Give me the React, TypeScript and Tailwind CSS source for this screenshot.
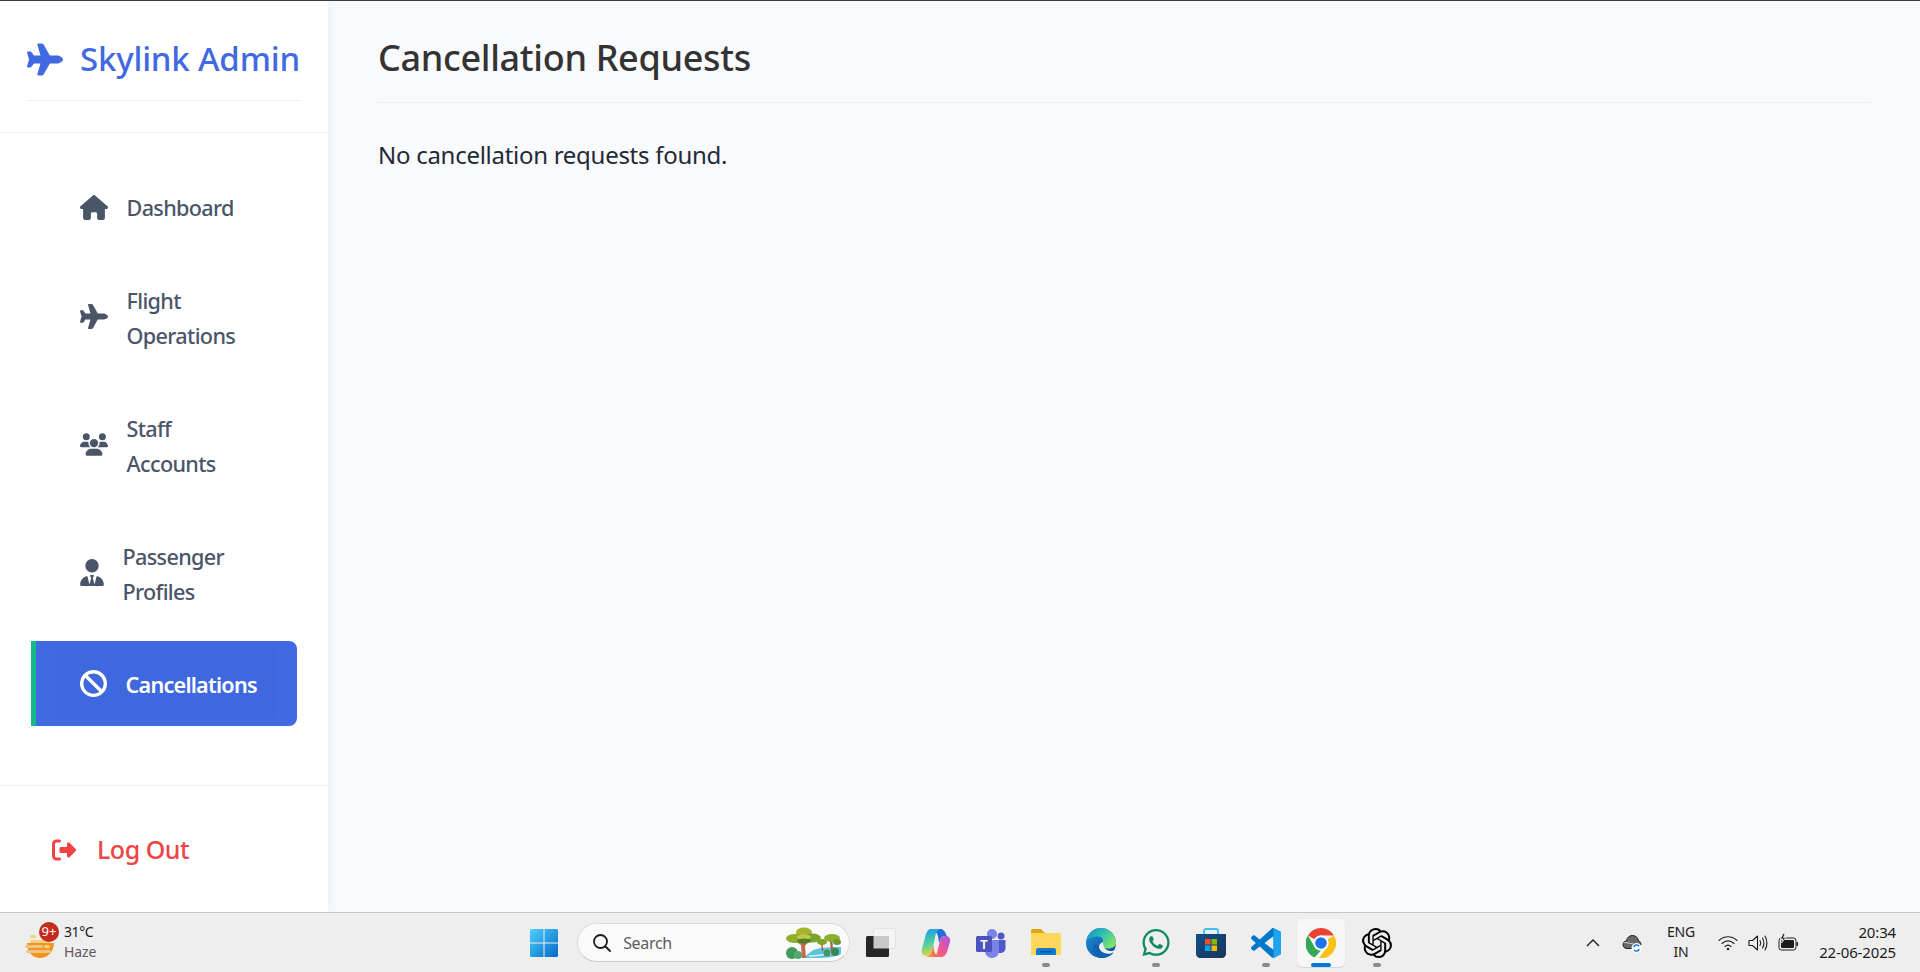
import type { ReactNode } from "react"
import { FaBan, FaHouse, FaPlane, FaRightFromBracket, FaUsers, FaUserTie, FaWhatsapp } from "react-icons/fa6"
import { SiOpenai } from "react-icons/si"

const font = "font-['Noto_Sans',sans-serif]"

const WindowsIcon = () => (
  <svg viewBox="0 0 30 30" className="h-[30px] w-[30px]">
    <defs>
      <linearGradient id="win" x1="0" y1="0" x2="1" y2="1">
        <stop offset="0" stopColor="#4fd0fb" />
        <stop offset="1" stopColor="#0269c8" />
      </linearGradient>
    </defs>
    <path d="M1 2.500A1.500 1.500 0 0 1 2.500 1H14.500V14.500H1ZM15.500 1H27.500A1.500 1.500 0 0 1 29 2.500V14.500H15.500ZM1 15.500H14.500V29H2.500A1.500 1.500 0 0 1 1 27.500ZM15.500 15.500H29V27.500A1.500 1.500 0 0 1 27.500 29H15.500Z" fill="url(#win)" />
  </svg>
)

const TreesIcon = () => (
  <svg viewBox="0 0 56 32" className="h-[32px] w-[56px]">
    <path d="M18 31C30 31 46 32 56 27V20C46 20 38 20 28 23Z" fill="#5cc4dc" />
    <path d="M24 29C34 29 44 27 54 25" stroke="#d6f3f6" strokeWidth="1.500" fill="none" />
    <circle cx="7" cy="26" r="6" fill="#3f9a5c" />
    <circle cx="13" cy="28" r="4" fill="#57a868" />
    <circle cx="42" cy="26" r="3.500" fill="#3f9a5c" />
    <circle cx="50" cy="25" r="4" fill="#2f8a58" />
    <path d="M17 31L16 18L10 14H13L18 16L23 13H25L20 19L21 31Z" fill="#c46a4a" />
    <path d="M46 25L45 14H47.500L48 25Z" fill="#a85f42" />
    <path d="M37 24L36 17H37.500L38.500 24Z" fill="#a85f42" />
    <ellipse cx="19" cy="5.500" rx="8" ry="5" fill="#a3b52c" />
    <ellipse cx="10" cy="11.500" rx="9" ry="4.500" fill="#8fae2e" />
    <ellipse cx="27" cy="11" rx="9" ry="4.500" fill="#7ca32a" />
    <ellipse cx="19" cy="10" rx="7" ry="2.500" fill="#c3c74a" />
    <ellipse cx="19" cy="14" rx="7" ry="2.500" fill="#4f7f26" />
    <ellipse cx="47" cy="11" rx="8" ry="4" fill="#8cb02c" />
    <ellipse cx="37" cy="15" rx="5" ry="3" fill="#7ca32a" />
    <ellipse cx="52" cy="15" rx="4" ry="3" fill="#6c9a2a" />
  </svg>
)

const TaskViewIcon = () => (
  <svg viewBox="0 0 30 30" className="h-[30px] w-[30px]">
    <rect x="7.500" y="0.500" width="22" height="20" rx="1.500" fill="#f4f4f4" stroke="#e2e2e2" />
    <rect x="0" y="8" width="23" height="21" rx="1.500" fill="#262626" />
    <rect x="7.500" y="8" width="15.500" height="12.500" fill="#c9c9c9" />
  </svg>
)

const CopilotIcon = () => (
  <svg viewBox="0 0 30 30" className="h-[30px] w-[30px]">
    <defs>
      <linearGradient id="copa" x1="0.3" y1="0" x2="0.5" y2="1">
        <stop offset="0" stopColor="#1f9be8" />
        <stop offset="0.55" stopColor="#4fd49a" />
        <stop offset="1" stopColor="#f9d33c" />
      </linearGradient>
      <linearGradient id="copb" x1="1" y1="0" x2="0" y2="1">
        <stop offset="0" stopColor="#a855e8" />
        <stop offset="0.6" stopColor="#f0568f" />
        <stop offset="1" stopColor="#f97e3c" />
      </linearGradient>
      <linearGradient id="copc" x1="0" y1="0" x2="1" y2="0">
        <stop offset="0" stopColor="#f9a93c" />
        <stop offset="1" stopColor="#ef4a5f" />
      </linearGradient>
    </defs>
    <path d="M10 1H19C22 1 24 3 25 6L26 9C24 7.500 21 8 20 10L18 15C17.500 6 15 2.500 10 1Z" fill="#1f6fe0" />
    <path d="M10 1H20C17 1 15.500 3 14.800 6L11.500 21C10.500 25 8.500 28 5 28C1.500 28 0 25 1 21L5 6C6 3 7.500 1 10 1Z" fill="url(#copa)" />
    <path d="M25 8C28 8 30 11 29 14L26 24C25 27 22.500 29 20 29H11C14 29 15.500 27 16.200 24L19.500 11C20 9 22 8 25 8Z" fill="url(#copb)" />
    <path d="M5 28C8.500 28 10.500 25 11.500 21L12.500 17C12.500 24 15 29 20 29H9C7.500 29 6 28.500 5 28Z" fill="url(#copc)" />
  </svg>
)

const TeamsIcon = () => (
  <svg viewBox="0 0 30 30" className="h-[30px] w-[30px]">
    <circle cx="16" cy="6" r="5" fill="#7b83eb" />
    <circle cx="25" cy="8" r="3.500" fill="#5059c9" />
    <path d="M21 12H29.500V20C29.500 23 27 25 24 25H21Z" fill="#5059c9" />
    <path d="M9 12H23V23C23 27 20 30 16 30C12 30 9 27 9 23Z" fill="#7b83eb" />
    <rect x="0" y="8" width="16" height="16" rx="1.500" fill="#4b53bc" />
    <text x="8" y="21" textAnchor="middle" fontSize="12" fontWeight="700" fill="#fff" fontFamily="Liberation Sans, sans-serif">T</text>
  </svg>
)

const FolderIcon = () => (
  <svg viewBox="0 0 30 27" className="h-[27px] w-[30px]">
    <path d="M0 2C0 1 1 0 2 0H10L14 4H0Z" fill="#dfa40e" />
    <path d="M0 4H29C29.500 4 30 4.500 30 5V26H0Z" fill="#fdd75c" />
    <path d="M5 26V21C5 20 6 19 7 19H23C24 19 25 20 25 21V26Z" fill="#0c7bd0" />
    <rect x="9" y="22" width="12" height="1.500" fill="#07569a" />
  </svg>
)

const EdgeIcon = () => (
  <svg viewBox="0 0 30 30" className="h-[30px] w-[30px]">
    <defs>
      <linearGradient id="edgea" x1="0" y1="0" x2="1" y2="0.6">
        <stop offset="0" stopColor="#0c8cc9" />
        <stop offset="0.55" stopColor="#34c1b0" />
        <stop offset="1" stopColor="#7fe36a" />
      </linearGradient>
      <linearGradient id="edgeb" x1="0" y1="0" x2="1" y2="1">
        <stop offset="0" stopColor="#1b8fd8" />
        <stop offset="1" stopColor="#0d4d9a" />
      </linearGradient>
    </defs>
    <circle cx="15" cy="15" r="15" fill="url(#edgeb)" />
    <path d="M0.500 12C3 4 9 0 15 0C24 0 30 7 30 15C30 19 26 20.500 21 20.500C17 20.500 15 19 15 17C15 15.500 17 14.500 17 12.500C17 10 14 8 10.500 8.500C6 9 2 11 0.500 12Z" fill="url(#edgea)" />
    <path d="M17 14C15 15 13 16 13 19C13 24 18 27 23 26C20 29 17 30 15 30C22 30 27 27 29 22C26 24 17 24 17 14Z" fill="#eeeeee" />
    <path d="M15 30C21 30 25 28 28 24C24 27 17 26 14 22C12 18 12 16 10 16C7 16 6 20 8 24C10 28 12 30 15 30Z" fill="#0f62ad" />
  </svg>
)

const StoreIcon = () => (
  <svg viewBox="0 0 30 30" className="h-[30px] w-[30px]">
    <defs>
      <linearGradient id="store" x1="0" y1="0" x2="1" y2="1">
        <stop offset="0" stopColor="#0e4f8c" />
        <stop offset="1" stopColor="#1b3457" />
      </linearGradient>
    </defs>
    <path d="M8 6V3C8 2 9 1 10 1H20C21 1 22 2 22 3V6" fill="none" stroke="#3cc2ee" strokeWidth="1.800" />
    <path d="M0 6H30V26C30 28 28 30 26 30H4C2 30 0 28 0 26Z" fill="url(#store)" />
    <rect x="9" y="11" width="5.500" height="5.500" fill="#f25022" />
    <rect x="15.500" y="11" width="5.500" height="5.500" fill="#7fba00" />
    <rect x="9" y="17.500" width="5.500" height="5.500" fill="#00a4ef" />
    <rect x="15.500" y="17.500" width="5.500" height="5.500" fill="#ffb900" />
  </svg>
)

const VsCodeIcon = () => (
  <svg viewBox="0 0 100 100" className="h-[30px] w-[30px]">
    <path d="M71 99.300C72.600 99.900 74.400 99.900 76 99.100L96.500 89.200C98.700 88.200 100 86 100 83.600V16.400C100 14 98.600 11.800 96.500 10.800L75.900 0.900C73.800 -0.100 71.400 0.100 69.500 1.500C69.200 1.700 69 1.900 68.700 2.100L29.300 38.100L12.100 25C10.500 23.800 8.300 23.900 6.800 25.200L1.300 30.300C-0.500 31.900 -0.500 34.700 1.300 36.300L16.200 50L1.300 63.600C-0.500 65.200 -0.500 68 1.300 69.600L6.800 74.600C8.300 75.900 10.500 76 12.100 74.800L29.300 61.700L68.700 97.700C69.300 98.400 70.100 98.900 71 99.300ZM75 27.300L45.100 50L75 72.700Z" fill="#0078c8" fillRule="evenodd" />
    <path d="M71 99.300C72.600 99.900 74.400 99.900 76 99.100L96.500 89.200C98.700 88.200 100 86 100 83.600V16.400C100 14 98.600 11.800 96.500 10.800L75.900 0.900C73.800 -0.100 71.400 0.100 69.500 1.500C72 0.500 75 2.500 75 5.500V94.500C75 97.500 73 99.800 71 99.300Z" fill="#1fa4ef" />
  </svg>
)

const ChromeIcon = () => (
  <svg viewBox="0 0 30 30" className="h-[30px] w-[30px]">
    <path d="M15 0A15 15 0 0 1 28 7.500H15A7.500 7.500 0 0 0 8.500 11.250L2 7.500A15 15 0 0 1 15 0Z" fill="#ea4335" />
    <path d="M2 7.500L8.500 18.750A7.500 7.500 0 0 0 15 22.500L8.500 29.500A15 15 0 0 1 2 7.500Z" fill="#34a853" />
    <path d="M28 7.500A15 15 0 0 1 13 29.900L21.500 18.750A7.500 7.500 0 0 0 21.500 11.250Z" fill="#fbc116" />
    <circle cx="15" cy="15" r="7.500" fill="#fff" />
    <circle cx="15" cy="15" r="5.800" fill="#1a73e8" />
  </svg>
)

const WeatherIcon = () => (
  <svg viewBox="0 0 30 30" className="h-[30px] w-[30px]">
    <path d="M2 15H29C29 24 22 30 15 30C8 30 2 24 2 15Z" fill="#f6931e" />
    <rect x="5" y="12" width="20" height="3" rx="1.500" fill="#f4d27a" />
    <rect x="19" y="17" width="6" height="3" rx="1.500" fill="#f4d27a" />
    <rect x="0" y="17" width="18" height="3" rx="1.500" fill="#e8c882" />
    <rect x="1" y="22" width="25" height="3" rx="1.500" fill="#e8c882" />
    <rect x="5" y="7" width="6" height="3" rx="1.500" fill="#f4d27a" />
  </svg>
)

const CloudSyncIcon = () => (
  <svg viewBox="0 0 20 20" className="h-5 w-5">
    <path d="M5 15.500C2 15.500 1 13.500 1 11.500C1 9.500 2.500 8 4.500 8C5 4.500 7.500 2.500 10.500 2.500C14 2.500 16 5 16.500 8C18.500 8.500 19 10 19 11.500L15 15.500Z" fill="#6a6a6a" stroke="#1f1f1f" strokeWidth="1" />
    <path d="M1.500 10C5 8 7 12 11 10" fill="none" stroke="#eeeeee" strokeWidth="0.800" />
    <circle cx="14.500" cy="15" r="5" fill="#fff" />
    <path d="M11.800 14A3 3 0 0 1 17 13M17.200 16A3 3 0 0 1 12 17" fill="none" stroke="#0a78d4" strokeWidth="1.400" />
  </svg>
)

const WifiIcon = () => (
  <svg viewBox="0 0 20 20" className="h-5 w-5" fill="none" stroke="#1c1c1c" strokeWidth="1.100" strokeLinecap="round">
    <path d="M1 7.500C6 2.500 14 2.500 19 7.500" />
    <path d="M4 10.500C7.500 7 12.500 7 16 10.500" />
    <path d="M7 13.500C8.800 11.800 11.200 11.800 13 13.500" />
    <circle cx="10" cy="16" r="1.200" fill="#1c1c1c" stroke="none" />
  </svg>
)

const VolumeIcon = () => (
  <svg viewBox="0 0 20 20" className="h-5 w-5" fill="none" stroke="#1c1c1c" strokeWidth="1.100" strokeLinecap="round" strokeLinejoin="round">
    <path d="M1 7.500H4.500L9.500 3V17L4.500 12.500H1Z" />
    <path d="M12 7.500C13 9 13 11 12 12.500" />
    <path d="M14.500 5C16.200 8 16.200 12 14.500 15" />
    <path d="M17 3C19.500 7.500 19.500 12.500 17 17" />
  </svg>
)

const BatteryIcon = () => (
  <svg viewBox="0 0 20 20" className="h-5 w-5">
    <rect x="1" y="5" width="17" height="12" rx="2.500" fill="#eeeeee" stroke="#1c1c1c" strokeWidth="1" />
    <rect x="3" y="7" width="13" height="8" rx="1" fill="#1c1c1c" />
    <rect x="18.500" y="9" width="1.500" height="4" rx="0.700" fill="#1c1c1c" />
    <path d="M5 0.500L2.500 6H5L3.500 10L8 4.500H5.500L7 0.500Z" fill="#1c1c1c" stroke="#eeeeee" strokeWidth="0.800" />
  </svg>
)

interface NavItem {
  label: ReactNode
  icon: ReactNode
}

const navItems: NavItem[] = [
  { label: "Dashboard", icon: <FaHouse className="h-[25px] w-[28px]" /> },
  { label: <>Flight<br />Operations</>, icon: <FaPlane className="-mt-[4px] h-[25px] w-[28px]" /> },
  { label: <>Staff<br />Accounts</>, icon: <FaUsers className="-mt-[3px] h-[25px] w-[28px]" /> },
  { label: <>Passenger<br />Profiles</>, icon: <FaUserTie className="-mt-[4px] h-[27px] w-[24px]" /> }
]

const taskbarApps: { icon: ReactNode; dot?: boolean }[] = [
  { icon: <TaskViewIcon /> },
  { icon: <CopilotIcon /> },
  { icon: <TeamsIcon /> },
  { icon: <FolderIcon />, dot: true },
  { icon: <EdgeIcon /> },
  { icon: <FaWhatsapp className="h-[31px] w-[31px] text-[#0f8a5f]" />, dot: true },
  { icon: <StoreIcon /> },
  { icon: <VsCodeIcon />, dot: true }
]

const App = () => {
  return (
    <div className={`${font} flex h-screen flex-col overflow-hidden border-t border-[#3c3c3c] bg-[#f9fafc]`}>
      <div className="flex min-h-0 flex-1">
        <aside className="flex w-[328px] shrink-0 flex-col bg-white shadow-[2px_0_10px_rgba(0,0,0,0.05)]">
          <div className="h-[132px] shrink-0 border-b border-[#f0f0f0] px-[27px]">
            <div className="flex h-[100px] items-center gap-[17px] border-b border-[#eeeeee] pt-[17px] text-[#4169e1]">
              <FaPlane className="h-[33px] w-[36px] shrink-0" />
              <span className="whitespace-nowrap text-[33px] font-medium tracking-[-0.2px]">Skylink Admin</span>
            </div>
          </div>

          <nav className="flex flex-1 flex-col gap-[9px] px-[31px] pt-[32.500px]">
            {navItems.map((item, i) => (
              <a key={i} className="flex items-center gap-[18.500px] rounded-lg py-[7px] pl-[49px] text-[#4a5568]">
                {item.icon}
                <span className="py-[17.500px] text-[21.6px] font-medium leading-[35px] tracking-[-0.03em]">{item.label}</span>
              </a>
            ))}
            <a className="-mt-[1.500px] flex h-[85px] items-center rounded-lg rounded-l-none border-l-[5px] border-[#12b98a] bg-[#4169e1] py-[7px] pl-[20px] pr-[20px] text-white">
              <span className="flex h-full flex-1 items-center gap-[18.500px] rounded-lg bg-[#3f68df] pl-[24px]">
                <FaBan className="-mt-[1px] h-[27px] w-[27px]" />
                <span className="pt-[3px] text-[21.6px] font-semibold tracking-[-0.035em]">Cancellations</span>
              </span>
            </a>
          </nav>

          <div className="flex h-[127px] shrink-0 items-center gap-[19px] border-t border-[#f0f0f0] pl-[50px] pt-[2px] text-[#ef4444]">
            <FaRightFromBracket className="h-[24px] w-[28px]" />
            <span className="text-[25px] font-medium tracking-[-0.02em]">Log Out</span>
          </div>
        </aside>

        <main className="flex-1 px-[50px] pt-[25px] pr-[49px]">
          <h1 className="border-b border-[#eeeff1] pb-[12px] text-[36px] font-medium leading-[64px] tracking-[-0.32px] text-[#333333]">Cancellation Requests</h1>
          <p className="mt-[34px] text-[24px] leading-[36px] tracking-[-0.28px] text-[#1f2937]">No cancellation requests found.</p>
        </main>
      </div>

      <footer className="relative flex h-[60px] shrink-0 items-center border-t border-[#c6c6c6] bg-[#eeeeee] text-[#1c1c1c]">
        <div className="relative ml-[25px] flex w-[30px] items-center">
          <WeatherIcon />
          <span className="absolute -top-[6px] left-[14px] flex h-5 w-5 items-center justify-center rounded-full bg-[#c42b1c] text-[13px] text-white">9+</span>
        </div>
        <div className="-mt-[2px] ml-[9px] flex flex-col text-[14px] leading-[20px]">
          <span className="tracking-[-0.03em]">31°C</span>
          <span className="tracking-[-0.01em] text-[#5c5c5c]">Haze</span>
        </div>

        <div className="ml-[433px] flex items-center">
          <WindowsIcon />
          <div className="ml-[18px] flex h-[39px] w-[273px] items-center rounded-full border border-[#dcdcdc] border-b-[#c8c8c8] bg-[#fafafa] pl-[14px]">
            <svg viewBox="0 0 20 20" className="h-[20px] w-[20px]" fill="none" stroke="#1c1c1c" strokeWidth="1.800" strokeLinecap="round">
              <circle cx="8.500" cy="8.500" r="6.500" />
              <path d="M13.500 13.500L18 18" />
            </svg>
            <span className="ml-[11px] text-[16px] tracking-[-0.02em] text-[#5c5c5c]">Search</span>
            <span className="ml-auto mr-[8px] flex"><TreesIcon /></span>
          </div>
          <div className="ml-[16px] flex items-center gap-[25px]">
            {taskbarApps.map((app, i) => (
              <div key={i} className="relative flex h-[30px] w-[30px] items-center justify-center">
                {app.icon}
                {app.dot && <span className="absolute -bottom-[9px] left-[11px] h-[4px] w-[8px] rounded-full bg-[#8a8a8a]" />}
              </div>
            ))}
          </div>
          <div className="relative ml-[16px] flex h-[48px] w-[48px] items-center justify-center rounded-md bg-[#f7f7f7] shadow-[0_1px_1px_rgba(0,0,0,0.1)]">
            <ChromeIcon />
            <span className="absolute bottom-0 left-[14px] h-[4px] w-[20px] rounded-full bg-[#0078d4]" />
          </div>
          <div className="relative ml-[17px] flex h-[30px] w-[30px] items-center justify-center">
            <SiOpenai className="h-[30px] w-[30px] text-black" />
            <span className="absolute -bottom-[9px] left-[11px] h-[4px] w-[8px] rounded-full bg-[#8a8a8a]" />
          </div>
        </div>

        <div className="ml-auto mr-[24px] flex items-center">
          <svg viewBox="0 0 14 8" className="h-[8px] w-[14px]" fill="none" stroke="#1c1c1c" strokeWidth="1.400">
            <path d="M1 7L7 1L13 7" />
          </svg>
          <span className="ml-[22px] flex"><CloudSyncIcon /></span>
          <div className="-mt-[1px] ml-[21px] flex w-[36px] flex-col items-center text-[14px] leading-[20px] tracking-[-0.02em]">
            <span>ENG</span>
            <span>IN</span>
          </div>
          <div className="ml-[19px] flex items-center gap-[10px]">
            <WifiIcon />
            <VolumeIcon />
            <BatteryIcon />
          </div>
          <div className="-mt-[1px] ml-[20px] flex w-[78px] flex-col items-end whitespace-nowrap text-[15px] leading-[20px] tracking-[-0.01em]">
            <span>20:34</span>
            <span>22-06-2025</span>
          </div>
        </div>
      </footer>
    </div>
  )
}

export default App
